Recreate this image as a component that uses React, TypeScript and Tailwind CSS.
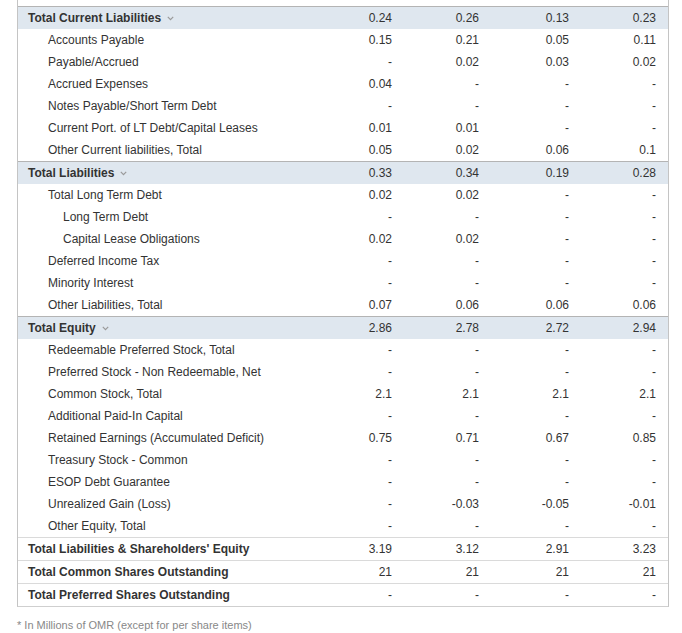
import React from "react";

type Row = { label: string; vals: string[]; level: 0 | 1 | 2; kind: "section" | "item" | "total" };

const D = ["-", "-", "-", "-"];

const rows: Row[] = [
  { label: "Total Current Liabilities", vals: ["0.24", "0.26", "0.13", "0.23"], level: 0, kind: "section" },
  { label: "Accounts Payable", vals: ["0.15", "0.21", "0.05", "0.11"], level: 1, kind: "item" },
  { label: "Payable/Accrued", vals: ["-", "0.02", "0.03", "0.02"], level: 1, kind: "item" },
  { label: "Accrued Expenses", vals: ["0.04", "-", "-", "-"], level: 1, kind: "item" },
  { label: "Notes Payable/Short Term Debt", vals: D, level: 1, kind: "item" },
  { label: "Current Port. of LT Debt/Capital Leases", vals: ["0.01", "0.01", "-", "-"], level: 1, kind: "item" },
  { label: "Other Current liabilities, Total", vals: ["0.05", "0.02", "0.06", "0.1"], level: 1, kind: "item" },
  { label: "Total Liabilities", vals: ["0.33", "0.34", "0.19", "0.28"], level: 0, kind: "section" },
  { label: "Total Long Term Debt", vals: ["0.02", "0.02", "-", "-"], level: 1, kind: "item" },
  { label: "Long Term Debt", vals: D, level: 2, kind: "item" },
  { label: "Capital Lease Obligations", vals: ["0.02", "0.02", "-", "-"], level: 2, kind: "item" },
  { label: "Deferred Income Tax", vals: D, level: 1, kind: "item" },
  { label: "Minority Interest", vals: D, level: 1, kind: "item" },
  { label: "Other Liabilities, Total", vals: ["0.07", "0.06", "0.06", "0.06"], level: 1, kind: "item" },
  { label: "Total Equity", vals: ["2.86", "2.78", "2.72", "2.94"], level: 0, kind: "section" },
  { label: "Redeemable Preferred Stock, Total", vals: D, level: 1, kind: "item" },
  { label: "Preferred Stock - Non Redeemable, Net", vals: D, level: 1, kind: "item" },
  { label: "Common Stock, Total", vals: ["2.1", "2.1", "2.1", "2.1"], level: 1, kind: "item" },
  { label: "Additional Paid-In Capital", vals: D, level: 1, kind: "item" },
  { label: "Retained Earnings (Accumulated Deficit)", vals: ["0.75", "0.71", "0.67", "0.85"], level: 1, kind: "item" },
  { label: "Treasury Stock - Common", vals: D, level: 1, kind: "item" },
  { label: "ESOP Debt Guarantee", vals: D, level: 1, kind: "item" },
  { label: "Unrealized Gain (Loss)", vals: ["-", "-0.03", "-0.05", "-0.01"], level: 1, kind: "item" },
  { label: "Other Equity, Total", vals: D, level: 1, kind: "item" },
  { label: "Total Liabilities & Shareholders' Equity", vals: ["3.19", "3.12", "2.91", "3.23"], level: 0, kind: "total" },
  { label: "Total Common Shares Outstanding", vals: ["21", "21", "21", "21"], level: 0, kind: "total" },
  { label: "Total Preferred Shares Outstanding", vals: D, level: 0, kind: "total" },
];

function Chevron() {
  return (
    <svg width="7" height="5" viewBox="0 0 7 5" className="ml-[6px] mt-[1px]" aria-hidden>
      <path d="M0.8 0.8 L3.5 3.6 L6.2 0.8" fill="none" stroke="#9a9a9a" strokeWidth="1.2" />
    </svg>
  );
}

export default function App() {
  return (
    <div
      className="w-[682px] h-[633px] bg-white text-[#333] overflow-hidden"
      style={{ fontFamily: '"Liberation Sans", Arial, sans-serif' }}
    >
      <div className="ml-[17px] w-[652px] border-l border-r border-b border-[#c4c4c4] border-b-[#cfcfcf]">
        <div className="h-[6px]" />
        {rows.map((r, i) => {
          const pad = r.level === 0 ? "pl-[10px]" : r.level === 1 ? "pl-[30px]" : "pl-[45px]";
          const rowCls =
            r.kind === "section"
              ? "bg-[#dfe7ef] border-t border-[#b4b4b4] font-bold"
              : r.kind === "total"
              ? "border-t border-[#dadada] font-bold"
              : "";
          return (
            <div
              key={i}
              className={`grid grid-cols-[298px_88px_87px_90px_87px] h-[22px] box-content text-[12px] leading-[22px] ${rowCls}`}
            >
              <div className={`${pad} flex items-center whitespace-nowrap`}>
                <span>{r.label}</span>
                {r.kind === "section" && <Chevron />}
              </div>
              {r.vals.map((v, j) => (
                <div key={j} className="text-right pr-[12px] font-normal">
                  {v}
                </div>
              ))}
            </div>
          );
        })}
      </div>
      <div className="ml-[17px] mt-[11px] text-[11px] leading-[14px] text-[#888]">
        * In Millions of OMR (except for per share items)
      </div>
    </div>
  );
}
